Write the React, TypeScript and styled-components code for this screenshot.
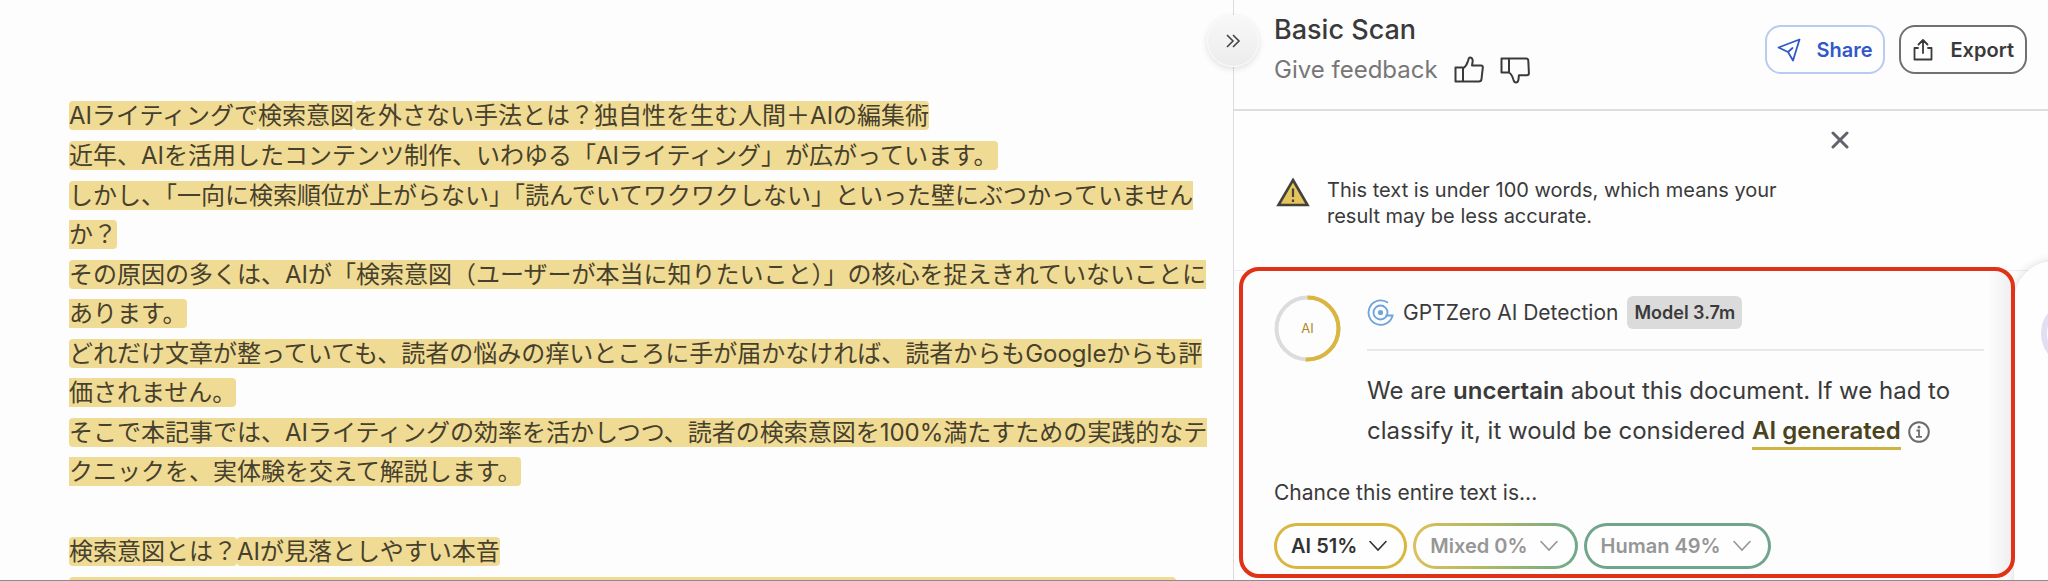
import React from "react";
import styled, { createGlobalStyle, css } from "styled-components";

const GlobalStyle = createGlobalStyle`
  *, *::before, *::after { box-sizing: border-box; }
  body {
    margin: 0;
    background: #fdfdfd;
    color: #3a3a3a;
    font-family: Inter, "Noto Sans CJK JP", sans-serif;
    font-size: 20px;
  }
  p, h1, h2 { margin: 0; }
  button { font: inherit; color: inherit; cursor: pointer; }
  svg { display: block; flex: none; }
`;

const Page = styled.div`
  display: grid;
  grid-template-columns: minmax(0, 1fr) 815px;
  height: 100vh;
  overflow: hidden;
  border-bottom: 1px solid #8c8c8c;
`;

const Editor = styled.main`
  display: flex;
  flex-direction: column;
  gap: 1px;
  padding: 96px 23px 0 69px;
  overflow: hidden;
`;

const Paragraph = styled.p`
  flex: none;
  min-height: 39px;
  font-size: 24px;
  line-height: 39px;
  color: #46402c;
`;

const Sentence = styled.mark`
  background: #f0db94;
  color: inherit;
  border-radius: 4px;
`;

const NextLine = styled.div`
  flex: none;
  height: 28px;
  margin: 5px 34px 0 0;
  background: #f0db94;
  border-radius: 4px;
`;

const Sidebar = styled.aside`
  position: relative;
  display: flex;
  flex-direction: column;
  border-left: 1px solid #dcdcdc;
`;

const CollapseButton = styled.button`
  position: absolute;
  z-index: 2;
  top: 15px;
  left: -27px;
  width: 52px;
  height: 52px;
  display: grid;
  place-items: center;
  padding: 0;
  border: 1px solid #fafafa;
  border-radius: 50%;
  background: linear-gradient(#f8f8f8, #ececec);
  box-shadow: 0 2px 6px rgba(0, 0, 0, 0.12);
`;

const Header = styled.header`
  display: flex;
  justify-content: space-between;
  height: 111px;
  padding: 13px 21px 0 40px;
  border-bottom: 2px solid #dedede;
`;

const Title = styled.h1`
  font-size: 27px;
  line-height: 34px;
  font-weight: 500;
`;

const Feedback = styled.div`
  display: flex;
  align-items: center;
  gap: 16px;
  margin-top: 7px;
  font-size: 24px;
  line-height: 32px;
  color: #777;
`;

const IconButton = styled.button`
  display: block;
  padding: 0;
  border: 0;
  background: none;
  color: #3a3a3a;
`;

const Actions = styled.div`
  display: flex;
  gap: 14px;
  padding-top: 12px;
`;

const ActionButton = styled.button<{ $primary?: boolean }>`
  display: flex;
  align-items: center;
  gap: 15px;
  height: 49px;
  padding: 0 11px 0 10px;
  border: 2px solid #707070;
  border-radius: 16px;
  background: #fefefe;
  font-weight: 600;
  ${(p) =>
    p.$primary &&
    css`
      border-color: #b9cbee;
      color: #3257c8;
    `}
`;

const Notice = styled.section`
  display: grid;
  grid-template-columns: 34px minmax(0, 460px) 1fr;
  column-gap: 17px;
  height: 159px;
  padding: 66px 0 0 42px;
  background: #fefefe;
  position: relative;
`;

const NoticeText = styled.p`
  line-height: 26px;
`;

const Dismiss = styled(IconButton)`
  position: absolute;
  top: 20px;
  right: 199px;
  color: #62626c;
`;

const Results = styled.section`
  position: relative;
  flex: 1;
  padding: 0 33px 0 5px;
  border-top: 1px solid #ececf2;
`;

const ResultCard = styled.article`
  position: relative;
  z-index: 1;
  height: 311px;
  margin-top: -4px;
  padding: 24px 27px 0 31px;
  border: 4px solid #e03216;
  border-radius: 20px;
  background: linear-gradient(to left, #efeff0, #fdfdfd 24px);
`;

const CardTop = styled.div`
  display: grid;
  grid-template-columns: 67px minmax(0, 1fr);
  column-gap: 26px;
`;

const Model = styled.div`
  display: flex;
  align-items: center;
  gap: 9px;
  height: 56px;
  padding-bottom: 20px;
  border-bottom: 2px solid #e8e8e8;
  font-size: 21px;
`;

const Badge = styled.span`
  padding: 0 7px;
  border-radius: 6px;
  background: #dbdbdb;
  font-size: 18px;
  line-height: 33px;
  font-weight: 600;
`;

const Verdict = styled.p`
  margin-top: 20px;
  font-size: 24px;
  line-height: 40px;

  strong { font-weight: 600; }
  svg { display: inline-block; vertical-align: -4px; margin-left: 7px; }
`;

const VerdictLink = styled.a`
  display: inline-block;
  line-height: 33px;
  border-bottom: 3px solid #cfb441;
  color: #4a431c;
  font-weight: 600;
  text-decoration: none;
`;

const ChanceTitle = styled.h2`
  margin-top: 28px;
  font-size: 21px;
  line-height: 28px;
  font-weight: 400;
`;

const Chances = styled.div`
  display: flex;
  gap: 6px;
  margin-top: 16px;
`;

const tones = {
  ai: "linear-gradient(#d9b73f, #d9b73f)",
  mixed: "linear-gradient(to right, #dcc05c, #a8b765 50%, #6fa98c)",
  human: "linear-gradient(#6fa58d, #6fa58d)",
};

const Chance = styled.button<{ $tone: keyof typeof tones }>`
  display: flex;
  align-items: center;
  gap: 12px;
  height: 46px;
  padding: 0 17px 0 14px;
  border: 3px solid transparent;
  border-radius: 23px;
  background: linear-gradient(#fefefe, #fefefe) padding-box, ${(p) => tones[p.$tone]} border-box;
  font-weight: 600;
  color: ${(p) => (p.$tone === "ai" ? "#333" : "#969696")};
`;

const NextCard = styled.div`
  position: absolute;
  top: -10px;
  left: 780px;
  width: 400px;
  height: 400px;
  padding: 39px 27px;
  border-radius: 40px;
  background: #fefefe;
  box-shadow: 0 0 8px rgba(60, 60, 90, 0.2);
`;

const NextRing = styled.div`
  width: 67px;
  height: 67px;
  border: 6px solid #e2dff3;
  border-radius: 50%;
`;

const ThumbUp = () => (
  <svg width="30" height="28" viewBox="0 0 30 28" fill="none" stroke="currentColor" strokeWidth="2" strokeLinejoin="round">
    <path d="M1.5 11.500h7.500V25.500H1.500zM9 12.500c3-2 4-4 5-7.500.5-2.500 1-3.500 2-3.500 2.500 0 3 2.500 2.500 5L18 9.500h9c1.500 0 2 1 1.800 2.200l-1.300 11.500c-.2 1.500-1 2.300-2.500 2.300H9" />
  </svg>
);

const ThumbDown = () => (
  <svg width="30" height="28" viewBox="0 0 30 28" fill="none" stroke="currentColor" strokeWidth="2" strokeLinejoin="round">
    <path d="M1.500 2.500h7.500v14H1.500zM9 2.500h17c1.500 0 2.200.8 2.300 2l.6 12.500c0 1.500-.7 2.300-2 2.300h-8l-.4 4c-.3 2.400-1 3.200-2.500 3.200-1.300 0-2-.8-2.500-2.500-.8-3-2-6-4.500-7.500" />
  </svg>
);

const Plane = () => (
  <svg width="24" height="24" viewBox="0 0 24 24" fill="none" stroke="currentColor" strokeWidth="1.800" strokeLinejoin="round" strokeLinecap="round">
    <path d="M22.500 1.500 1.500 9.500l9.500 4.500L16 22.500zM11 14l4.500-4" />
  </svg>
);

const Upload = () => (
  <svg width="24" height="24" viewBox="-2 0 24 24" fill="none" stroke="currentColor" strokeWidth="1.800" strokeLinejoin="round" strokeLinecap="round">
    <path d="M5 10H1.500v11.500h17V10H15M10 15V2M5.500 6.500 10 2l4.500 4.500" />
  </svg>
);

const Warning = () => (
  <svg width="34" height="30" viewBox="0 0 34 30">
    <path d="M17 3 31.500 28H2.500z" fill="#e4c45c" stroke="#42413a" strokeWidth="2.600" />
    <path d="M17 11.500v8.500M17 22.500v2.500" stroke="#42413a" strokeWidth="2.200" />
  </svg>
);

const Logo = () => (
  <svg width="27" height="27" viewBox="0 0 27 27" fill="none" stroke="#6fa3dc" strokeWidth="1.800">
    <path d="M21 3.800A12.200 12.200 0 1 0 25.600 16.500H18.500" />
    <circle cx="13.500" cy="13.500" r="7" />
    <circle cx="13.500" cy="13.500" r="2.600" fill="#6fa3dc" stroke="none" />
  </svg>
);

const Info = () => (
  <svg width="22" height="22" viewBox="0 0 22 22" fill="none" stroke="#6c6c6c" strokeWidth="2">
    <circle cx="11" cy="11" r="9.800" />
    <path d="M8.500 9.500H11v6.300M8 15.800h6" strokeWidth="1.800" />
    <circle cx="11" cy="6.200" r="1.400" fill="#6c6c6c" stroke="none" />
  </svg>
);

const Chevron = () => (
  <svg width="18" height="12" viewBox="0 0 18 12" fill="none" stroke="currentColor" strokeWidth="1.600" strokeLinecap="round">
    <path d="m1 1.500 8 8.500 8-8.500" />
  </svg>
);

const Ring = ({ value }: { value: number }) => (
  <svg width="67" height="67" viewBox="0 0 67 67" fill="none" strokeWidth="4">
    <circle cx="33.500" cy="33.500" r="31" stroke="#dcdcdc" />
    <circle
      cx="33.500"
      cy="33.500"
      r="31"
      stroke="#dab63e"
      pathLength="100"
      strokeDasharray={`${value} 100`}
      transform="rotate(-90 33.5 33.5)"
    />
    <text x="33.500" y="38" textAnchor="middle" fontSize="13" fill="#b4852c" stroke="none">AI</text>
  </svg>
);

const paragraphs: string[][] = [
  ["AIライティングで", "検索意図", "を外さない手法とは？", "独自性を生む人間＋AIの編集術"],
  ["近年、AIを活用したコンテンツ制作、いわゆる「AIライティング」が広がっています。"],
  ["しかし、「一向に検索順位が上がらない」「読んでいてワクワクしない」といった壁にぶつかっていませんか？"],
  ["その原因の多くは、AIが「検索意図（ユーザーが本当に知りたいこと）」の核心を捉えきれていないことにあります。"],
  ["どれだけ文章が整っていても、読者の悩みの痒いところに手が届かなければ、読者からもGoogleからも評価されません。"],
  ["そこで本記事では、AIライティングの効率を活かしつつ、読者の検索意図を100%満たすための実践的なテクニックを、実体験を交えて解説します。"],
  [],
  ["検索意図とは？", "AIが見落としやすい本音"],
];

const chances: { tone: keyof typeof tones; label: string }[] = [
  { tone: "ai", label: "AI 51%" },
  { tone: "mixed", label: "Mixed 0%" },
  { tone: "human", label: "Human 49%" },
];

export default function App() {
  return (
    <Page>
      <GlobalStyle />
      <Editor lang="ja">
        {paragraphs.map((sentences, i) => (
          <Paragraph key={i}>
            {sentences.map((s) => (
              <Sentence key={s}>{s}</Sentence>
            ))}
          </Paragraph>
        ))}
        <NextLine />
      </Editor>
      <Sidebar>
        <CollapseButton aria-label="Collapse panel">
          <svg width="16" height="16" viewBox="0 0 16 16" fill="none" stroke="#444" strokeWidth="1.600">
            <path d="m2 2 6 6-6 6M8 2l6 6-6 6" />
          </svg>
        </CollapseButton>
        <Header>
          <div>
            <Title>Basic Scan</Title>
            <Feedback>
              Give feedback
              <IconButton aria-label="Good result"><ThumbUp /></IconButton>
              <IconButton aria-label="Bad result"><ThumbDown /></IconButton>
            </Feedback>
          </div>
          <Actions>
            <ActionButton $primary><Plane />Share</ActionButton>
            <ActionButton><Upload />Export</ActionButton>
          </Actions>
        </Header>
        <Notice>
          <Warning />
          <NoticeText>This text is under 100 words, which means your result may be less accurate.</NoticeText>
          <Dismiss aria-label="Dismiss">
            <svg width="18" height="18" viewBox="0 0 18 18" stroke="currentColor" strokeWidth="3" strokeLinecap="round">
              <path d="m2 2 14 14M16 2 2 16" />
            </svg>
          </Dismiss>
        </Notice>
        <Results>
          <NextCard><NextRing /></NextCard>
          <ResultCard>
            <CardTop>
              <Ring value={51} />
              <div>
                <Model>
                  <Logo />
                  <span>GPTZero AI Detection</span>
                  <Badge>Model 3.7m</Badge>
                </Model>
                <Verdict>
                  We are <strong>uncertain</strong> about this document. If we had to classify it, it would be considered{" "}
                  <VerdictLink href="#ai">AI generated</VerdictLink>
                  <Info />
                </Verdict>
              </div>
            </CardTop>
            <ChanceTitle>Chance this entire text is...</ChanceTitle>
            <Chances>
              {chances.map((c) => (
                <Chance key={c.tone} $tone={c.tone}>
                  {c.label}
                  <Chevron />
                </Chance>
              ))}
            </Chances>
          </ResultCard>
        </Results>
      </Sidebar>
    </Page>
  );
}
